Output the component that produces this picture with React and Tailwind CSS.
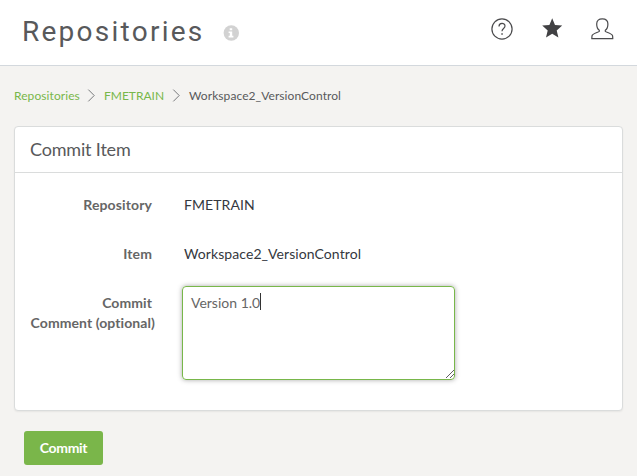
function Chevron() {
  return (
    <svg className="-mt-[2px] h-[13px] w-[9px] shrink-0" viewBox="0 0 9 13" fill="none" stroke="#77797b" strokeWidth="1">
      <path d="M1.3 .6 L7.2 6.5 L1.3 12.4" />
    </svg>
  );
}

function Field({ label, value }) {
  return (
    <div className="flex h-[49px] text-[14px] leading-5">
      <div className="w-[137px] shrink-0 text-right font-bold tracking-[0.12px] text-[#666]">{label}</div>
      <div className="ml-8 tracking-[0.08px] text-[#343840]">{value}</div>
    </div>
  );
}

export default function App() {
  return (
    <div className="flex h-[476px] w-[637px] flex-col overflow-hidden bg-[#f4f3f1] font-['Lato',sans-serif]">
      <header className="flex h-[66px] shrink-0 items-start border-b border-[#d3d8dd] bg-white pl-[22px]">
        <h1 className="mt-3 w-[201px] whitespace-nowrap font-['Roboto',sans-serif] text-[28px] leading-10 tracking-[2.25px] text-[#58595b]">
          Repositories
        </h1>
        <svg className="mt-[25px] h-4 w-4 shrink-0" viewBox="0 0 16 16">
          <circle cx="8.3" cy="8" r="7.7" fill="#d2d2d2" />
          <path d="M6.7 3.3h2.5v2H6.7zM5.6 6.5h3.6v4.3h1.2v1.6H5.6v-1.6h1.2V8.1H5.6z" fill="#fff" />
        </svg>
        <div className="ml-auto flex pr-[23px] pt-[17px]">
          <svg className="h-6 w-6" viewBox="0 0 24 24" fill="none" stroke="#4b4b4d" strokeWidth="1.2">
            <circle cx="12" cy="12" r="10.1" />
            <path d="M9 9.5c0-4 6-4 6-.4 0 2.4-3 2.5-3 5.2" strokeWidth="1.2" />
            <path d="M11.3 16.2h1.5v1.5h-1.5z" fill="#4b4b4d" stroke="none" />
          </svg>
          <svg className="ml-[26px] h-6 w-6" viewBox="0 0 24 24" fill="#414143">
            <path d="M12.2 1.2l2.8 6.8 7.2.6-5.5 4.9 1.7 7.1-6.2-3.8-6.2 3.8 1.7-7.1-5.5-4.9 7.2-.6z" />
          </svg>
          <svg className="ml-[26px] h-6 w-6" viewBox="0 0 24 24" fill="none" stroke="#4b4b4d" strokeWidth="1.2" strokeLinejoin="round">
            <path d="M9.3 13.2C7.5 12 6.7 9.8 6.7 6.9 6.7 3.5 8.8 1.8 12.3 1.8s5.6 1.7 5.6 5.1c0 2.9-.8 5.1-2.6 6.3v1.1c1 1 6.9 2.4 7.3 4.5l.2 2.9H1.8l.2-2.9c.4-2.1 6.3-3.5 7.3-4.5z" />
          </svg>
        </div>
      </header>

      <nav className="mt-5 flex h-5 shrink-0 items-center pl-[14px] text-[12px] leading-5 text-[#58595b]">
        <span className="w-[73px] tracking-[0.08px] text-[#78b74a]">Repositories</span>
        <Chevron />
        <span className="ml-2 w-[68px] text-[#78b74a]">FMETRAIN</span>
        <Chevron />
        <span className="ml-2 tracking-[0.08px]">Workspace2_VersionControl</span>
      </nav>

      <section className="ml-[14px] mt-5 h-[285px] w-[609px] shrink-0 rounded-[4px] border border-[#dadcdc] bg-white shadow-[0_1px_2px_rgba(0,0,0,0.06)]">
        <h2 className="h-[46px] border-b border-[#dadcdc] pl-[15px] text-[18px] leading-[45px] tracking-[-0.18px] text-[#58595b]">Commit Item</h2>
        <div className="pt-[22px]">
          <Field label="Repository" value="FMETRAIN" />
          <Field label="Item" value="Workspace2_VersionControl" />
          <div className="flex text-[14px] leading-5">
            <div className="w-[140px] shrink-0 text-right font-bold tracking-[0.08px] text-[#666]">
              <div className="pr-[3px]">Commit</div>
              <div className="whitespace-nowrap">Comment (optional)</div>
            </div>
            <div className="-mt-[7px] ml-[27px] flex h-[94px] w-[273px] rounded-[4px] border border-[#78b74a] pl-2 pt-[6px] text-[#666] shadow-[0_0_5px_rgba(0,0,0,0.35)]">
              <span>Version 1.0</span>
              <span className="h-[17px] w-px bg-[#333]" />
              <svg className="mb-px ml-auto h-2 w-2 self-end" viewBox="0 0 8 8" stroke="#606060" strokeWidth="1">
                <path d="M0 8L8 0M4 8L8 4" />
              </svg>
            </div>
          </div>
        </div>
      </section>

      <button className="ml-6 mt-5 h-[34px] w-[79px] shrink-0 rounded-[3px] bg-[#7ab64a] text-[14px] font-bold leading-5 tracking-[-0.35px] text-white">
        Commit
      </button>
    </div>
  );
}
